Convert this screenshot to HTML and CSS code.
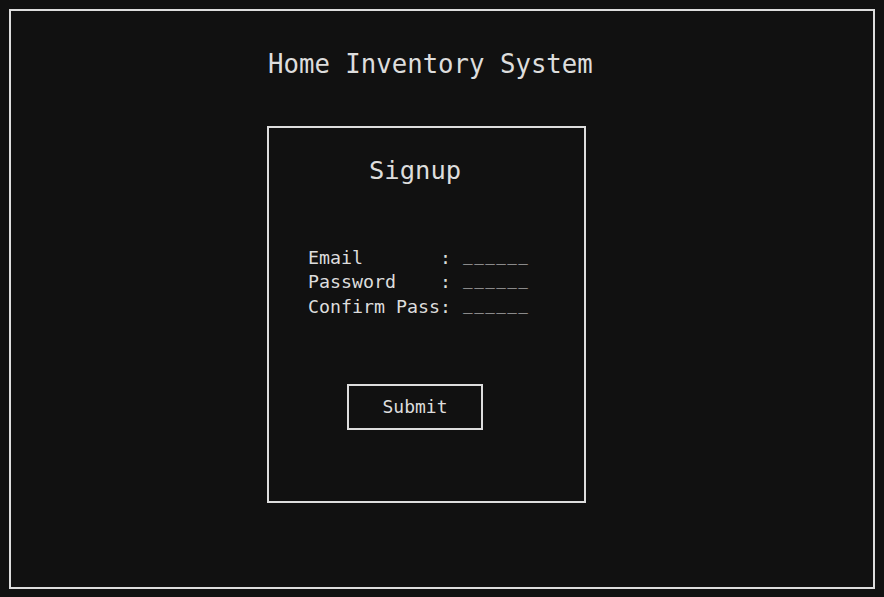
FILE: index.html
```html
<!DOCTYPE html>
<html>
<head>
<meta charset="utf-8">
<link rel="stylesheet" href="styles.css">
</head>
<body>
<div class="frame">
  <h1 class="title">Home Inventory System</h1>
  <div class="card">
    <h2 class="card-title">Signup</h2>
    <div class="form">
      <div class="row">Email       : <span class="blank">______</span></div>
      <div class="row">Password    : <span class="blank">______</span></div>
      <div class="row">Confirm Pass: <span class="blank">______</span></div>
    </div>
    <button class="submit">Submit</button>
  </div>
</div>
</body>
</html>
```

FILE: styles.css
```css
html, body {
  margin: 0;
  background: #111111;
}
body {
  padding: 9px 9px 8px 9px;
  font-family: "DejaVu Sans Mono", monospace;
  color: #dddddd;
}
.frame {
  box-sizing: border-box;
  height: 580px;
  border: 2px solid #dddddd;
  padding-left: 256px;
  padding-top: 38px;
}
.title {
  margin: 0;
  font-weight: normal;
  font-size: 25.7px;
  line-height: 30px;
  padding-left: 1px;
}
.card {
  box-sizing: border-box;
  width: 319px;
  height: 377px;
  margin-top: 47px;
  border: 2px solid #dddddd;
  padding-top: 27px;
}
.card-title {
  margin: 0 0 0 100px;
  font-weight: normal;
  font-size: 25.5px;
  line-height: 30px;
}
.form {
  margin: 60.5px 0 0 39px;
  font-size: 18.3px;
  line-height: 24.5px;
}
.row {
  white-space: pre;
  height: 24.5px;
}
.blank {
  font-size: 16px;
  line-height: 0;
  letter-spacing: 1.4px;
  padding-left: 1px;
  vertical-align: 3px;
}
.submit {
  display: flex;
  align-items: center;
  justify-content: center;
  box-sizing: border-box;
  width: 136px;
  height: 46px;
  margin: 65px 0 0 78px;
  padding: 0 0 2px 0;
  background: transparent;
  border: 2px solid #dddddd;
  color: #dddddd;
  font-family: "DejaVu Sans Mono", monospace;
  font-size: 18px;
}
```
